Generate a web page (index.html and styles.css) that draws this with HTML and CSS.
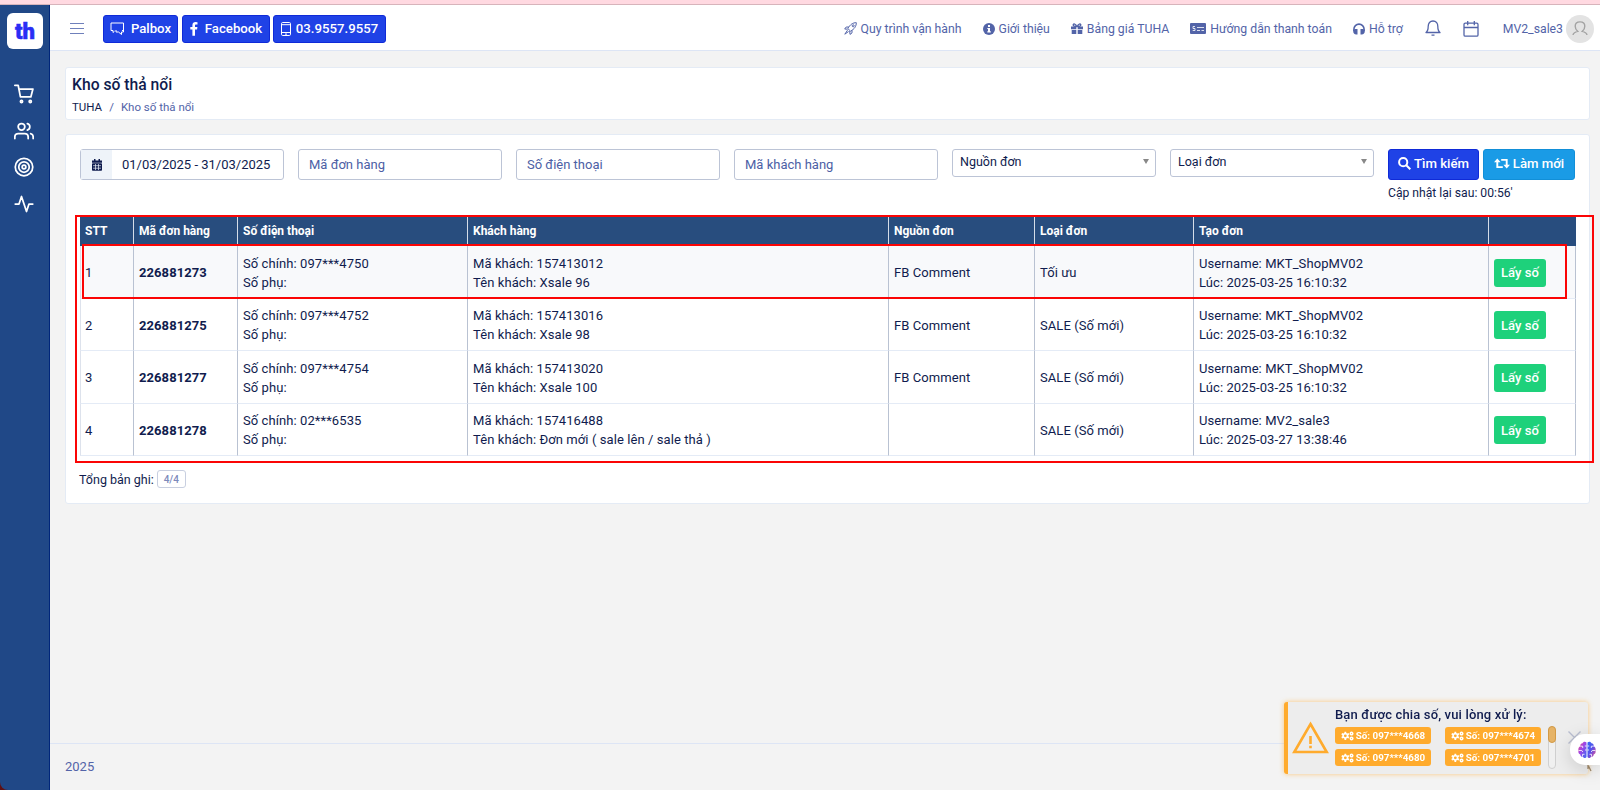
FILE: index.html
```html
<!DOCTYPE html>
<html lang="vi">

<head>
    <meta charset="UTF-8" />
    <meta name="viewport" content="width=device-width, initial-scale=1.0" />
    <title>Kho số thả nổi</title>
    <link rel="stylesheet" href="styles.css">
</head>

<body>
    <!-- Icon dùng chung -->
    <svg class="icon-defs">
        <symbol id="icon-cogs" viewBox="0 0 24 18">
            <path fill="currentColor" fill-rule="evenodd" d="M6.500 1h3l.4 2.400 1.600.9 2.400-.8 1.500 2.700-1.900 1.500v1.800l1.900 1.500-1.500 2.700-2.400-.8-1.600.9-.4 2.400h-3l-.4-2.400-1.600-.9-2.400.8L.6 11l1.900-1.500V7.700L.6 6.200l1.500-2.700 2.400.8 1.600-.9zM8 6a2.600 2.600 0 1 0 0 5.200A2.600 2.600 0 0 0 8 6z" />
            <path fill="none" stroke="currentColor" stroke-width="2.800" d="M19.500 2.200a2.300 2.300 0 1 1 0 4.600 2.300 2.300 0 0 1 0-4.600zM19.500 11.200a2.300 2.300 0 1 1 0 4.600 2.300 2.300 0 0 1 0-4.600z" />
        </symbol>
    </svg>

    <div class="top-strip"></div>
    <div class="app">
        <!-- Menu trái -->
        <aside class="sidebar">
            <a class="logo">th</a>
            <nav class="side-nav">
                <svg viewBox="0 0 24 24"><circle cx="9" cy="21" r="1.300" /><circle cx="19.500" cy="21" r="1.300" /><path d="M1 1.500h4l2.700 14h12.500L22.700 6H6" /></svg>
                <svg viewBox="0 0 24 24"><path d="M17 21v-2a4 4 0 0 0-4-4H5a4 4 0 0 0-4 4v2M23 21v-2a4 4 0 0 0-3-3.870M16 3.130a4 4 0 0 1 0 7.750" /><circle cx="9" cy="7" r="4" /></svg>
                <svg viewBox="0 0 24 24"><circle cx="12" cy="12" r="10.500" /><circle cx="12" cy="12" r="6.300" /><circle cx="12" cy="12" r="2.200" /></svg>
                <svg viewBox="0 0 24 24"><path d="M22.500 12H18l-3 9L9 3l-3 9H1.500" /></svg>
            </nav>
        </aside>

        <div class="main">
            <!-- Thanh trên -->
            <header class="topbar">
                <div class="burger"><i></i><i></i><i></i></div>
                <a class="btn btn-top btn-palbox">
                    <svg width="15" height="14" viewBox="0 0 15 14" fill="none" stroke="currentColor" stroke-width="1"><path d="M3 8.500H1V1h12.500v7.500H12" /><path d="M3 8.500v2l1.500-1.300M13.500 4v6h-2v2.500L8.500 10H6V8" /></svg>
                    <span>Palbox</span>
                </a>
                <a class="btn btn-top btn-facebook">
                    <svg width="8" height="14" viewBox="0 0 8 14"><path fill="currentColor" d="M7.500.2v2.200H6.200C5.200 2.400 5 2.900 5 3.600v1.500h2.400L7.100 7.500H5V13.800H2.400V7.500H.3V5.100h2.100V3.300C2.400 1.200 3.700.1 5.600.1z" /></svg>
                    <span>Facebook</span>
                </a>
                <a class="btn btn-top btn-phone">
                    <svg width="10" height="14" viewBox="0 0 10 14" fill="none" stroke="currentColor"><rect x=".5" y=".5" width="9" height="13" rx="1.200" /><path d="M.5 2.700h9M.5 10.500h9M4 12.100h2" /></svg>
                    <span>03.9557.9557</span>
                </a>

                <nav class="top-nav">
                    <a class="nav-flow">
                        <svg width="13" height="13" viewBox="0 0 13 13" fill="none" stroke="currentColor" stroke-width="1"><path d="M12.300.7C9 .6 6.300 2.300 3.800 6.500l2.800 2.700c4-2.300 5.700-5 5.700-8.500zM4.600 5H2.200L.7 7l3 .2M8 8.500v2.400L6 12.400 5.700 9M3.500 8.200L.8 12.200l3.800-2.700" /><circle cx="9.200" cy="3.800" r="1" /></svg>
                        <span>Quy trình vận hành</span>
                    </a>
                    <a class="nav-info">
                        <svg width="12" height="12" viewBox="0 0 12 12"><circle cx="6" cy="6" r="6" fill="currentColor" /><path fill="#fff" d="M5 2h2v1.900H5zM4.300 4.900H7v3.300h.8v1.200H4.300V8.200H5V6.100h-.7z" /></svg>
                        <span>Giới thiệu</span>
                    </a>
                    <a class="nav-price">
                        <svg width="12" height="11" viewBox="0 0 12 11"><path fill="none" stroke="currentColor" stroke-width="1.300" d="M5.800 3.500C4.800.8 2.200.2 2.200 2c0 1.200 1.200 1.500 3.600 1.500zM6.200 3.500C7.200.8 9.800.2 9.800 2c0 1.200-1.200 1.500-3.600 1.500z" /><path fill="currentColor" d="M0 3.400h5.300v2.900H0zM6.700 3.400H12v2.900H6.700zM.7 7h4.600v4H.7zM6.700 7h4.600v4H6.700z" /></svg>
                        <span>Bảng giá TUHA</span>
                    </a>
                    <a class="nav-pay">
                        <svg width="16" height="11" viewBox="0 0 16 11"><rect width="16" height="11" rx="1" fill="currentColor" /><path fill="none" stroke="#fff" d="M5 3.500H3v2h2v2H2.700M7 4.500h7M7 7.500h3M11.500 7.500H14" opacity=".8" /></svg>
                        <span>Hướng dẫn thanh toán</span>
                    </a>
                    <a class="nav-help">
                        <svg width="12" height="12" viewBox="0 0 12 12"><path fill="none" stroke="currentColor" stroke-width="1.600" d="M.9 8V6.200a5.100 5.100 0 0 1 10.200 0V8" /><path fill="currentColor" d="M2.300 6h2.200v5.500H3.300C1.300 11.500.2 10 .2 8.500S1 6 2.300 6zM9.700 6H7.500v5.500h1.200c2 0 3.100-1.500 3.100-3S11 6 9.700 6z" /></svg>
                        <span>Hỗ trợ</span>
                    </a>
                    <svg class="nav-bell" width="16" height="17" viewBox="0 0 16 17" fill="none" stroke="currentColor" stroke-width="1.300"><path d="M1 12.500c1.800-1.300 2.200-2.800 2.200-6.200C3.200 3.200 5 1 8 1s4.800 2.200 4.800 5.300c0 3.400.4 4.900 2.200 6.200zM6.500 15.200h3" stroke-linejoin="round" /></svg>
                    <svg class="nav-calendar" width="16" height="16" viewBox="0 0 16 16" fill="none" stroke="currentColor" stroke-width="1.300"><rect x="1" y="2.200" width="14" height="13" rx="1.300" /><path d="M1 6.500h14M4.700 0v4.200M11.300 0v4.200" /></svg>
                    <div class="user">
                        <span>MV2_sale3</span>
                        <div class="avatar">
                            <svg width="16" height="15" viewBox="0 0 16 15" fill="none" stroke="#a3a3a3" stroke-width="1.400"><path d="M1 14c.4-2.300 2-2.900 4.700-3.600C3.600 8.700 3.200 6.900 3.200 5.300 3.200 2.600 5.200.9 8 .9s4.800 1.700 4.800 4.400c0 1.600-.4 3.400-2.500 5.100 2.700.7 4.300 1.300 4.700 3.600" /></svg>
                        </div>
                    </div>
                </nav>
            </header>

            <div class="content">
                <section class="card page-title">
                    <h1>Kho số thả nổi</h1>
                    <div class="breadcrumb"><b>TUHA</b><i>/</i><span>Kho số thả nổi</span></div>
                </section>

                <section class="card list-card">
                    <!-- Bộ lọc -->
                    <div class="filters">
                        <div class="field date-field">
                            <div class="date-icon">
                                <svg width="10" height="12" viewBox="0 0 10 12"><path fill="currentColor" d="M2 0h1.500v1.500h3V0H8v1.500h2v2.200H0V1.500h2z" /><rect y="4.200" width="10" height="7.500" rx=".8" fill="currentColor" /><path stroke="#eef3f9" stroke-width=".7" d="M1 6.700h8M1 9.200h8M3.500 5v6M6.500 5v6" /></svg>
                            </div>
                            <span>01/03/2025 - 31/03/2025</span>
                        </div>
                        <div class="field">Mã đơn hàng</div>
                        <div class="field">Số điện thoại</div>
                        <div class="field">Mã khách hàng</div>
                        <div class="field select"><span>Nguồn đơn</span></div>
                        <div class="field select"><span>Loại đơn</span></div>
                        <div class="actions">
                            <div class="action-buttons">
                                <a class="btn btn-search">
                                    <svg width="13" height="13" viewBox="0 0 13 13" fill="none" stroke="currentColor" stroke-width="2"><circle cx="5.200" cy="5.200" r="4.100" /><path d="M8.300 8.300l4 4" /></svg>
                                    <span>Tìm kiếm</span>
                                </a>
                                <a class="btn btn-refresh">
                                    <svg width="16" height="11" viewBox="0 0 16 11"><path fill="none" stroke="currentColor" stroke-width="1.900" d="M3.300 2.500v6.600h5.500M12.700 8.500V1.900H7.200" /><path fill="currentColor" d="M0 4.200L3.300.4l3.300 3.800zM9.400 6.800L12.700 10.600 16 6.800z" /></svg>
                                    <span>Làm mới</span>
                                </a>
                            </div>
                            <div class="countdown">Cập nhật lại sau: 00:56'</div>
                        </div>
                    </div>

                    <!-- Danh sách số -->
                    <div class="table-wrap">
                        <table class="orders">
                            <colgroup>
                                <col class="col-stt"><col class="col-code"><col class="col-phone"><col class="col-customer">
                                <col class="col-source"><col class="col-type"><col class="col-created"><col class="col-action">
                            </colgroup>
                            <thead>
                                <tr>
                                    <th>STT</th>
                                    <th>Mã đơn hàng</th>
                                    <th>Số điện thoại</th>
                                    <th>Khách hàng</th>
                                    <th>Nguồn đơn</th>
                                    <th>Loại đơn</th>
                                    <th>Tạo đơn</th>
                                    <th></th>
                                </tr>
                            </thead>
                            <tbody>
                                <tr class="active">
                                    <td>1</td>
                                    <td><b>226881273</b></td>
                                    <td>Số chính: 097***4750<br>Số phụ:</td>
                                    <td>Mã khách: 157413012<br>Tên khách: Xsale 96</td>
                                    <td>FB Comment</td>
                                    <td>Tối ưu</td>
                                    <td>Username: MKT_ShopMV02<br>Lúc: 2025-03-25 16:10:32</td>
                                    <td><a class="btn btn-take">Lấy số</a></td>
                                </tr>
                                <tr>
                                    <td>2</td>
                                    <td><b>226881275</b></td>
                                    <td>Số chính: 097***4752<br>Số phụ:</td>
                                    <td>Mã khách: 157413016<br>Tên khách: Xsale 98</td>
                                    <td>FB Comment</td>
                                    <td>SALE (Số mới)</td>
                                    <td>Username: MKT_ShopMV02<br>Lúc: 2025-03-25 16:10:32</td>
                                    <td><a class="btn btn-take">Lấy số</a></td>
                                </tr>
                                <tr>
                                    <td>3</td>
                                    <td><b>226881277</b></td>
                                    <td>Số chính: 097***4754<br>Số phụ:</td>
                                    <td>Mã khách: 157413020<br>Tên khách: Xsale 100</td>
                                    <td>FB Comment</td>
                                    <td>SALE (Số mới)</td>
                                    <td>Username: MKT_ShopMV02<br>Lúc: 2025-03-25 16:10:32</td>
                                    <td><a class="btn btn-take">Lấy số</a></td>
                                </tr>
                                <tr>
                                    <td>4</td>
                                    <td><b>226881278</b></td>
                                    <td>Số chính: 02***6535<br>Số phụ:</td>
                                    <td>Mã khách: 157416488<br>Tên khách: Đơn mới ( sale lên / sale thả )</td>
                                    <td></td>
                                    <td>SALE (Số mới)</td>
                                    <td>Username: MV2_sale3<br>Lúc: 2025-03-27 13:38:46</td>
                                    <td><a class="btn btn-take">Lấy số</a></td>
                                </tr>
                            </tbody>
                        </table>
                        <div class="mark mark-table"></div>
                        <div class="mark mark-row"></div>
                    </div>

                    <div class="total">Tổng bản ghi: <span>4/4</span></div>
                </section>
            </div>

            <footer class="footer">2025</footer>
        </div>
    </div>

    <!-- Thông báo chia số -->
    <div class="toast">
        <svg class="toast-icon" width="37" height="33" viewBox="0 0 37 33" fill="none" stroke="#ffab2d"><path stroke-width="2.600" d="M18.500 3L34.700 31H2.300z" /><path stroke-width="2.600" d="M18.500 15v8M18.500 24.700v2.600" /></svg>
        <div class="toast-body">
            <div class="toast-title">Bạn được chia số, vui lòng xử lý:</div>
            <div class="toast-list">
                <span class="badge"><svg><use href="#icon-cogs" /></svg>Số: 097***4668</span>
                <span class="badge"><svg><use href="#icon-cogs" /></svg>Số: 097***4674</span>
                <span class="badge"><svg><use href="#icon-cogs" /></svg>Số: 097***4680</span>
                <span class="badge"><svg><use href="#icon-cogs" /></svg>Số: 097***4701</span>
            </div>
        </div>
        <div class="toast-scroll"><i></i></div>
        <svg class="toast-close" width="13" height="13" viewBox="0 0 13 13" stroke="#b9bed0" stroke-width="1.400"><path d="M.5.5l12 12M12.500.5l-12 12" /></svg>
    </div>
    <svg class="resize-mark" width="5" height="8" viewBox="0 0 5 8"><path stroke="#a08a6c" stroke-width="1.300" d="M1 0v5M1.500 2l2.500 5" /></svg>

    <!-- Nút trợ lý -->
    <div class="assistant">
        <svg width="18" height="18" viewBox="0 0 18 18">
            <defs>
                <linearGradient id="brain" x1="0" y1="0" x2="1" y2="1">
                    <stop offset="0" stop-color="#f0478a" />
                    <stop offset=".45" stop-color="#9b45e8" />
                    <stop offset="1" stop-color="#3d6df2" />
                </linearGradient>
                <linearGradient id="brainRight" x1="0" y1="0" x2="1" y2="1">
                    <stop offset="0" stop-color="#2f6cf5" />
                    <stop offset=".5" stop-color="#5b4fe8" />
                    <stop offset="1" stop-color="#f0568a" />
                </linearGradient>
            </defs>
            <path fill="url(#brain)" d="M8.500 1.500C7 .2 5 .8 4.500 2.300 2.800 2.400 2 3.800 2.400 5.200.6 6-.1 8 .6 9.500-.1 11.300.8 13 2.300 13.400c0 1.500 1.300 2.500 2.600 2.300.8 1.500 2.800 1.700 3.600.4z" />
            <path fill="url(#brainRight)" d="M9.500 1.500c1.500-1.300 3.500-.7 4 .8 1.700.1 2.500 1.500 2.100 2.900 1.800.8 2.500 2.800 1.800 4.300.7 1.800-.2 3.500-1.700 3.900 0 1.500-1.300 2.500-2.600 2.300-.8 1.500-2.800 1.700-3.600.4z" />
            <path fill="none" stroke="#fff" stroke-width=".8" d="M2.300 5.200h2.400V7M.8 9.500h3l1 1.500M8.500 5H6.800M8.500 9H7M4.500 15.500v-2.200h2M15.700 5.200h-2.400V7M17.200 9.500h-3l-1 1.500M9.500 5h1.700M9.500 9H11M13.500 15.500v-2.200h-2" />
        </svg>
    </div>
</body>

</html>
```

FILE: styles.css
```css
* {
    box-sizing: border-box;
}

html,
body {
    margin: 0;
    padding: 0;
    height: 100vh;
    overflow: hidden;
}

body {
    display: flex;
    flex-direction: column;
    background: #5f1014;
    font-family: Roboto, "Liberation Sans", sans-serif;
    font-size: 13px;
    color: #101c4e;
}

svg {
    display: block;
    flex: none;
}

.icon-defs {
    position: absolute;
    width: 0;
    height: 0;
}

.top-strip {
    height: 5px;
    flex: none;
    background: #ffd9e1;
    border-bottom: 1px solid #d7b4bb;
}

.app {
    flex: 1;
    display: flex;
    min-height: 0;
    border-bottom-left-radius: 8px;
    overflow: hidden;
}

/* Menu trái */
.sidebar {
    width: 50px;
    flex: none;
    background: #204887;
    border-right: 1px solid #00267a;
    display: flex;
    flex-direction: column;
    align-items: center;
    padding-top: 8px;
}

.logo {
    width: 36px;
    height: 36px;
    margin-left: 1px;
    border-radius: 6px;
    background: #fff;
    color: #2a2df5;
    font-size: 22px;
    font-weight: 900;
    line-height: 37px;
    text-align: center;
    -webkit-text-stroke: 0.5px #2a2df5;
}

.side-nav {
    display: flex;
    flex-direction: column;
    gap: 16.500px;
    margin-top: 35px;
}

.side-nav svg {
    width: 20px;
    height: 20px;
    margin-left: -1px;
    fill: none;
    stroke: #fff;
    stroke-width: 2.100;
    stroke-linecap: round;
    stroke-linejoin: round;
}

.main {
    flex: 1;
    display: flex;
    flex-direction: column;
    min-width: 0;
    background: #f3f3f3;
}

/* Thanh trên */
.topbar {
    height: 46px;
    flex: none;
    display: flex;
    align-items: center;
    padding: 2px 6px 0 20px;
    background: #fff;
    border-bottom: 1px solid #dde5f5;
}

.burger {
    width: 14px;
    margin-right: 19px;
    display: flex;
    flex-direction: column;
    gap: 4px;
}

.burger i {
    height: 1px;
    background: #6f80bb;
}

.btn {
    display: flex;
    align-items: center;
    justify-content: center;
    border-radius: 3px;
    color: #fff;
    font-weight: 500;
    white-space: nowrap;
}

.btn-top {
    height: 28px;
    background: #1f42e6;
    border: 1px solid #0f2ad8;
    font-size: 13.200px;
}

.btn-palbox {
    width: 75px;
    gap: 6px;
    margin-right: 4px;
}

.btn-facebook {
    width: 88px;
    gap: 7px;
    margin-right: 3px;
}

.btn-phone {
    width: 113px;
    gap: 5px;
}

.top-nav {
    display: flex;
    align-items: center;
    margin-left: auto;
    color: #5364a8;
    font-size: 12.250px;
}

.top-nav a {
    display: flex;
    align-items: center;
    gap: 4px;
    margin-right: 21px;
    white-space: nowrap;
}

.nav-bell {
    margin-left: 1px;
    margin-right: 22px;
}

.nav-calendar {
    margin-right: 24px;
}

.user {
    display: flex;
    align-items: center;
    gap: 3px;
}

.avatar {
    width: 28px;
    height: 28px;
    border-radius: 50%;
    background: #e3e3e3;
    display: flex;
    align-items: center;
    justify-content: center;
}

/* Nội dung */
.content {
    flex: 1;
    padding: 16px 10px 0 15px;
}

.card {
    background: #fff;
    border: 1px solid #e4ebf5;
    border-radius: 3px;
}

.page-title {
    height: 53px;
    padding: 8px 6px;
}

.page-title h1 {
    margin: 0;
    font-size: 15.700px;
    font-weight: 500;
    line-height: 18px;
}

.breadcrumb {
    display: flex;
    gap: 7px;
    margin-top: 6px;
    font-size: 11.500px;
    line-height: 15px;
    color: #5364a8;
}

.breadcrumb b {
    font-weight: 400;
    color: #101c4e;
}

.breadcrumb i {
    font-style: normal;
}

.list-card {
    height: 370px;
    margin-top: 14px;
    padding: 14px 14px 0;
}

.filters {
    display: grid;
    grid-template-columns: repeat(6, 204px) 187px;
    column-gap: 14px;
    height: 68px;
    align-items: start;
}

.field {
    height: 31px;
    border: 1px solid #bcc4d6;
    border-radius: 3px;
    padding: 0 10px;
    line-height: 29px;
    color: #4c60a5;
}

.date-field {
    display: flex;
    padding: 0;
    color: #101c4e;
}

.date-field span {
    margin-left: 10px;
}

.date-icon {
    width: 31px;
    display: flex;
    align-items: center;
    justify-content: center;
    background: #eef3f9;
}

.select {
    height: 28px;
    padding: 0 6px 3px 7px;
    font-size: 12.500px;
    line-height: 24px;
    display: flex;
    align-items: center;
    justify-content: space-between;
    color: #101c4e;
}

.select::after {
    content: "";
    border: 3.500px solid transparent;
    border-top: 5px solid #888;
    border-bottom: 0;
}

.action-buttons {
    display: flex;
    gap: 4px;
}

.btn-search,
.btn-refresh {
    height: 31px;
    padding-bottom: 2px;
    gap: 3px;
    font-size: 13.200px;
}

.btn-search {
    width: 91px;
    background: #1f42e6;
    border: 1px solid #0f2ad8;
}

.btn-refresh {
    width: 92px;
    background: #1a9be6;
    border: 1px solid #128fd8;
}

.countdown {
    margin-top: 5px;
    font-size: 12.150px;
    line-height: 16px;
}

/* Bảng */
.table-wrap {
    position: relative;
}

.orders {
    width: 1496px;
    table-layout: fixed;
    border-collapse: separate;
    border-spacing: 0;
}

.col-stt { width: 54px; }
.col-code { width: 104px; }
.col-phone { width: 230px; }
.col-customer { width: 421px; }
.col-source { width: 146px; }
.col-type { width: 159px; }
.col-created { width: 295px; }
.col-action { width: 87px; }

.orders th,
.orders td {
    padding: 0 4px 0 5px;
    text-align: left;
    vertical-align: middle;
    white-space: nowrap;
}

.orders th {
    height: 29px;
    padding-bottom: 1px;
    background: #284d7e;
    border-right: 1px solid #d5dde8;
    color: #fff;
    font-size: 12px;
    font-weight: 700;
}

.orders th:last-child {
    border-right: 0;
}

.orders td {
    height: 52.500px;
    padding-top: 2px;
    border-right: 1px solid #b9c2d2;
    border-bottom: 1px solid #e4ebf6;
    line-height: 19px;
    letter-spacing: 0.08px;
}

.orders td:first-child {
    padding-left: 4px;
    border-left: 1px solid #dde2ec;
}

.active td {
    background: #f8f9fb;
}

.btn-take {
    width: 52px;
    height: 28px;
    background: #1ed17b;
}

/* Khung đánh dấu */
.mark {
    position: absolute;
    border: 2px solid #fb0505;
    pointer-events: none;
}

.mark-table {
    left: -5px;
    top: -2px;
    width: 1519px;
    height: 248px;
}

.mark-row {
    left: 2px;
    top: 27px;
    width: 1485px;
    height: 55px;
}

.total {
    display: flex;
    align-items: center;
    gap: 3px;
    margin: 14px 0 0 -1px;
    font-size: 12.500px;
}

.total span {
    width: 29px;
    height: 18px;
    border: 1px solid #c8cfe0;
    border-radius: 3px;
    color: #7c89bb;
    font-size: 10px;
    font-weight: 500;
    line-height: 17px;
    text-align: center;
}

.footer {
    height: 47px;
    flex: none;
    padding: 0 15px;
    border-top: 1px solid #dde5f5;
    line-height: 46px;
    color: #5364a8;
}

/* Thông báo */
.toast {
    position: fixed;
    left: 1284px;
    top: 702px;
    width: 304px;
    height: 72px;
    display: flex;
    padding-left: 4px;
    background: #ededed;
    border-left: 4px solid #ffab2d;
    border-radius: 3px;
    box-shadow: 0 0 5px rgba(255, 171, 45, 0.6);
}

.toast-icon {
    margin-top: 19px;
}

.toast-body {
    margin-left: 6px;
    width: 206px;
}

.toast-title {
    margin-top: 5px;
    font-weight: 500;
    line-height: 16px;
    letter-spacing: 0.15px;
    white-space: nowrap;
}

.toast-list {
    display: grid;
    grid-template-columns: 96px 96px;
    gap: 5px 14px;
    margin-top: 4px;
}

.badge {
    height: 17px;
    display: flex;
    align-items: center;
    justify-content: center;
    gap: 2px;
    border-radius: 3px;
    background: #ffab2d;
    color: #fff;
    font-size: 9.800px;
    font-weight: 700;
    white-space: nowrap;
}

.badge svg {
    width: 13px;
    height: 10px;
}

.toast-scroll {
    width: 8px;
    height: 43px;
    margin: 24px 0 0 7px;
    border: 1px solid #d0d0d0;
    border-radius: 4px;
    background: #f0f0f0;
}

.toast-scroll i {
    display: block;
    height: 17px;
    margin: -1px;
    border: 1px solid #d39a45;
    border-radius: 4px;
    background: #e6b366;
}

.toast-close {
    margin: 29px 0 0 12px;
}

.resize-mark {
    position: fixed;
    left: 1587px;
    top: 764px;
}

.assistant {
    position: fixed;
    right: 0;
    top: 734px;
    width: 30px;
    height: 31px;
    display: flex;
    align-items: center;
    padding-left: 8px;
    background: #fff;
    border-radius: 15px 0 0 15px;
    box-shadow: 0 4px 18px rgba(0, 0, 0, 0.15);
}
```
